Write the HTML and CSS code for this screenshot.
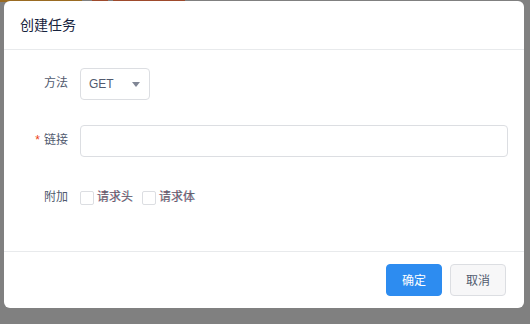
FILE: index.html
```html
<!DOCTYPE html>
<html lang="zh-CN">
<head>
<meta charset="utf-8">
<link rel="stylesheet" href="styles.css">
</head>
<body>
<div class="mask">
  <div class="modal">
    <div class="modal-header">创建任务</div>
    <div class="modal-body">
      <div class="form-item">
        <label class="form-label">方法</label>
        <div class="form-content">
          <div class="select">
            <span class="select-value">GET</span>
            <span class="caret"></span>
          </div>
        </div>
      </div>
      <div class="form-item">
        <label class="form-label required">链接</label>
        <div class="form-content grow">
          <input class="input" type="text">
        </div>
      </div>
      <div class="form-item last">
        <label class="form-label">附加</label>
        <div class="form-content">
          <label class="checkbox"><span class="checkbox-inner"></span><span class="checkbox-text">请求头</span></label>
          <label class="checkbox"><span class="checkbox-inner"></span><span class="checkbox-text">请求体</span></label>
        </div>
      </div>
    </div>
    <div class="modal-footer">
      <button class="btn btn-primary">确定</button>
      <button class="btn btn-default">取消</button>
    </div>
  </div>
</div>
</body>
</html>
```

FILE: styles.css
```css
html, body {
  margin: 0;
  padding: 0;
}
body {
  width: 530px;
  height: 324px;
  overflow: hidden;
  font-family: "Liberation Sans", "Noto Sans CJK SC", sans-serif;
  font-size: 12px;
  color: #515a6e;
  background-color: #808080;
  background-image:
    linear-gradient(to right,
      #9a6b22 0, #9a6b22 82px,
      #808080 82px, #808080 92px,
      #9e4a2c 92px, #9e4a2c 108px,
      #808080 108px, #808080 113px,
      #9e4a2c 113px, #9e4a2c 185px,
      #808080 185px);
  background-size: 100% 2px;
  background-repeat: no-repeat;
}
.mask {
  padding: 1px 6px 0 4px;
}
.modal {
  width: 520px;
  height: 307px;
  background: #fff;
  border-radius: 6px;
  display: flex;
  flex-direction: column;
}
.modal-header {
  padding: 14px 16px;
  line-height: 20px;
  font-size: 14px;
  color: #17233d;
  border-bottom: 1px solid #e8eaec;
}
.modal-body {
  flex: 1;
  padding: 18px 16px 0 16px;
}
.form-item {
  display: flex;
  align-items: center;
  height: 32px;
  margin-bottom: 25px;
}
.form-label {
  width: 60px;
  box-sizing: border-box;
  padding: 0 12px 3px 0;
  text-align: right;
  color: #515a6e;
  font-size: 12px;
  line-height: 14px;
}
.form-label.required::before {
  content: "*";
  color: #ed4014;
  margin-right: 4px;
  font-family: "Liberation Sans", sans-serif;
  font-size: 12px;
}
.form-content {
  display: flex;
  align-items: center;
}
.form-content.grow {
  flex: 1;
}
.select {
  width: 70px;
  height: 32px;
  box-sizing: border-box;
  border: 1px solid #dcdee2;
  border-radius: 4px;
  display: flex;
  align-items: center;
  justify-content: space-between;
  padding: 0 9px 0 8px;
}
.select-value {
  font-size: 12px;
  color: #515a6e;
  line-height: 14px;
  padding-bottom: 1px;
}
.caret {
  width: 0;
  height: 0;
  border-left: 4px solid transparent;
  border-right: 4px solid transparent;
  border-top: 5px solid #808695;
}
.input {
  width: 100%;
  height: 32px;
  box-sizing: border-box;
  border: 1px solid #dcdee2;
  border-radius: 4px;
  outline: none;
  padding: 4px 7px;
  font: inherit;
}
.checkbox {
  display: flex;
  align-items: center;
  margin-right: 9px;
}
.checkbox-inner {
  width: 14px;
  height: 14px;
  box-sizing: border-box;
  border: 1px solid #dcdee2;
  border-radius: 2px;
  background: #fff;
  margin-right: 3px;
}
.checkbox-text {
  font-size: 12px;
  line-height: 14px;
  padding-bottom: 3px;
  color: #66606e;
  text-shadow: -0.5px 0 rgba(255, 0, 70, 0.35), 0.5px 0 rgba(0, 220, 230, 0.35);
}
.modal-footer {
  border-top: 1px solid #e8eaec;
  padding: 12px 18px;
  display: flex;
  justify-content: flex-end;
  gap: 8px;
}
.btn {
  height: 32px;
  padding: 0 15px 2px;
  font-family: "Liberation Sans", "Noto Sans CJK SC", sans-serif;
  font-size: 12px;
  border-radius: 4px;
  border: 1px solid transparent;
  cursor: pointer;
}
.btn-primary {
  background: #2d8cf0;
  border-color: #2d8cf0;
  color: #fff;
}
.btn-default {
  background: #f7f7f8;
  border-color: #dcdee2;
  color: #515a6e;
}
```
